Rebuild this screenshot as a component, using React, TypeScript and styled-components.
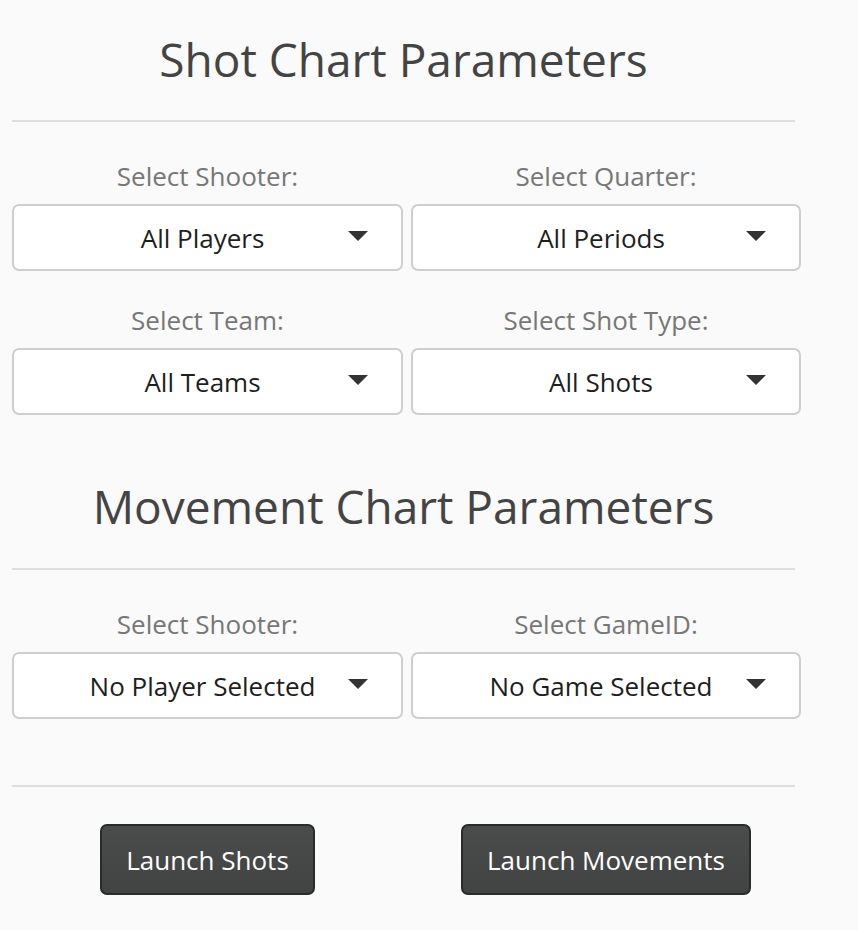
import React from "react";
import styled, { createGlobalStyle } from "styled-components";

const GlobalStyle = createGlobalStyle`
  html, body {
    margin: 0;
    padding: 0;
    background: #fafafa;
  }
  body {
    font-family: "Open Sans", "Liberation Sans", sans-serif;
  }
`;

const Page = styled.div`
  width: 789px;
  padding: 0 0 30px 12px;
`;

const Heading = styled.h2<{ $top: number }>`
  width: 783px;
  margin: ${(p) => p.$top}px 0 0;
  font-size: 46px;
  line-height: 58px;
  font-weight: 400;
  color: #444;
  text-align: center;
`;

const Divider = styled.hr<{ $top: number }>`
  width: 783px;
  height: 2px;
  margin: ${(p) => p.$top}px 0 0;
  border: none;
  background: #dedede;
`;

const FieldGrid = styled.div`
  display: grid;
  grid-template-columns: 391px 390px;
  column-gap: 8px;
  row-gap: 33px;
  margin-top: 38px;
`;

const Field = styled.div`
  display: flex;
  flex-direction: column;
  gap: 12px;
`;

const Label = styled.div`
  font-size: 26px;
  line-height: 32px;
  color: #777;
  text-align: center;
`;

const SelectBox = styled.div`
  position: relative;
  box-sizing: border-box;
  height: 67px;
  display: flex;
  align-items: center;
  justify-content: center;
  padding: 0 22px 0 12px;
  background: #fff;
  border: 2px solid #cecece;
  border-radius: 7px;
  font-size: 26px;
  color: #1e1e1e;
`;

const Caret = styled.span`
  position: absolute;
  right: 33px;
  top: 25px;
  width: 0;
  height: 0;
  border-left: 10px solid transparent;
  border-right: 10px solid transparent;
  border-top: 10px solid #333;
`;

const ButtonRow = styled.div`
  display: grid;
  grid-template-columns: 391px 390px;
  column-gap: 8px;
  margin-top: 37px;
  justify-items: center;
`;

const LaunchButton = styled.button`
  box-sizing: border-box;
  height: 71px;
  padding: 0 24px;
  background: linear-gradient(#4a4b4b, #424343);
  border: 2px solid #2a2a2a;
  border-radius: 7px;
  color: #fff;
  font-family: "Open Sans", "Liberation Sans", sans-serif;
  font-size: 26px;
  cursor: pointer;
`;

type SelectField = { label: string; value: string };

const Select = ({ label, value }: SelectField) => (
  <Field>
    <Label>{label}</Label>
    <SelectBox>
      {value}
      <Caret />
    </SelectBox>
  </Field>
);

const shotFields: SelectField[] = [
  { label: "Select Shooter:", value: "All Players" },
  { label: "Select Quarter:", value: "All Periods" },
  { label: "Select Team:", value: "All Teams" },
  { label: "Select Shot Type:", value: "All Shots" },
];

const movementFields: SelectField[] = [
  { label: "Select Shooter:", value: "No Player Selected" },
  { label: "Select GameID:", value: "No Game Selected" },
];

export default function App() {
  return (
    <>
      <GlobalStyle />
      <Page>
        <Heading $top={30}>Shot Chart Parameters</Heading>
        <Divider $top={32} />
        <FieldGrid>
          {shotFields.map((f, i) => (
            <Select key={i} {...f} />
          ))}
        </FieldGrid>
        <Heading $top={62}>Movement Chart Parameters</Heading>
        <Divider $top={33} />
        <FieldGrid>
          {movementFields.map((f, i) => (
            <Select key={i} {...f} />
          ))}
        </FieldGrid>
        <Divider $top={66} />
        <ButtonRow>
          <LaunchButton>Launch Shots</LaunchButton>
          <LaunchButton>Launch Movements</LaunchButton>
        </ButtonRow>
      </Page>
    </>
  );
}
